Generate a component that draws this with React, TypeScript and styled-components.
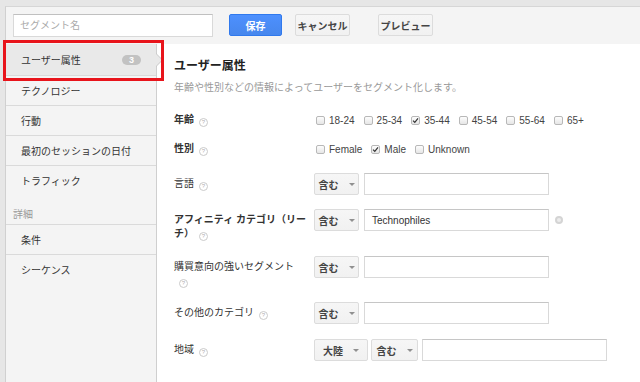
import React from 'react';
import styled, { createGlobalStyle } from 'styled-components';

const GlobalStyle = createGlobalStyle`
  html, body {
    margin: 0;
    padding: 0;
  }
  body {
    font-family: "Liberation Sans", "Noto Sans CJK JP", sans-serif;
    font-size: 10px;
    color: #333;
    background: #e6e6e6;
    overflow: hidden;
  }
`;

const Page = styled.div`
  width: 640px;
  height: 382px;
  box-sizing: border-box;
  padding: 6px 0 0 5px;
  background: #e6e6e6;
  overflow: hidden;
`;

const Frame = styled.div`
  height: 100%;
  display: flex;
  flex-direction: column;
  border-top: 1px solid #d6d6d6;
  border-left: 1px solid #d0d0d0;
  background: #f4f4f4;
`;

const Toolbar = styled.div`
  height: 37px;
  flex: none;
  box-sizing: border-box;
  display: flex;
  align-items: flex-start;
  padding: 7px 0 0 7px;
`;

const NameInput = styled.input`
  width: 200px;
  height: 23px;
  box-sizing: border-box;
  border: 1px solid #d9d9d9;
  border-top-color: #c0c0c0;
  padding: 0 6px;
  font: inherit;
  font-size: 10px;
  background: #fff;
  outline: none;
  &::placeholder {
    color: #aaa;
  }
`;

const Button = styled.button<{ $primary?: boolean; $width: number; $gap: number }>`
  width: ${({ $width }) => $width}px;
  height: 22px;
  margin-left: ${({ $gap }) => $gap}px;
  box-sizing: border-box;
  border-radius: 2px;
  border: 1px solid ${({ $primary }) => ($primary ? '#3079ed' : '#dcdcdc')};
  background: ${({ $primary }) =>
    $primary ? 'linear-gradient(#4d90fe, #4787ed)' : 'linear-gradient(#f6f6f6, #f1f1f1)'};
  color: ${({ $primary }) => ($primary ? '#fff' : '#444')};
  font: inherit;
  font-size: 10px;
  font-weight: bold;
  padding: 0;
`;

const Body = styled.div`
  flex: 1;
  display: flex;
  min-height: 0;
`;

const Sidebar = styled.nav`
  width: 150px;
  flex: none;
  border-right: 1px solid #cfcfcf;
  background: #f4f4f4;
`;

const NavGroup = styled.div``;

const NavItem = styled.div<{ $active?: boolean }>`
  position: relative;
  height: ${({ $active }) => ($active ? 31 : 29)}px;
  display: flex;
  align-items: center;
  padding-left: 15px;
  border-bottom: 1px solid #dadada;
  background: ${({ $active }) => ($active ? '#e9e9e9' : 'transparent')};
  color: #333;
  ${NavGroup} > &:last-child {
    border-bottom: none;
  }
  ${({ $active }) =>
    $active &&
    `
    &::before, &::after {
      content: '';
      position: absolute;
      top: 50%;
      width: 0;
      height: 0;
      border-style: solid;
      border-color: transparent;
    }
    &::before {
      left: 100%;
      margin-top: -7px;
      border-width: 7px 0 7px 7px;
      border-left-color: #c8c8c8;
    }
    &::after {
      left: 100%;
      margin-top: -6px;
      border-width: 6px 0 6px 6px;
      border-left-color: #e9e9e9;
    }
  `}
`;

const Badge = styled.span`
  margin-left: auto;
  margin-right: 15px;
  width: 19px;
  height: 10px;
  border-radius: 5px;
  background: #c2c2c2;
  color: #fff;
  font-size: 9px;
  font-weight: bold;
  line-height: 10px;
  text-align: center;
`;

const Highlight = styled.div`
  position: absolute;
  left: -3px;
  top: -4px;
  width: 161px;
  height: 41px;
  box-sizing: border-box;
  border: 3px solid #e8141b;
  z-index: 2;
  pointer-events: none;
`;

const SectionLabel = styled.div`
  height: 30px;
  box-sizing: border-box;
  display: flex;
  align-items: flex-end;
  padding: 0 0 2px 7px;
  line-height: 14px;
  border-bottom: 1px solid #dadada;
  color: #999;
`;

const Main = styled.main`
  flex: 1;
  background: #fff;
  padding: 14px 0 0 17px;
`;

const Title = styled.h2`
  margin: 0;
  font-size: 12px;
  line-height: 16px;
  font-weight: bold;
  color: #222;
`;

const Subtitle = styled.p`
  margin: 7px 0 0;
  line-height: 14px;
  color: #999;
`;

const Rows = styled.div`
  margin-top: 17px;
`;

const Row = styled.div<{ $mb: number }>`
  display: flex;
  align-items: flex-start;
  margin-bottom: ${({ $mb }) => $mb}px;
`;

const Label = styled.div<{ $bold?: boolean; $top: number }>`
  width: 140px;
  flex: none;
  box-sizing: border-box;
  padding: ${({ $top }) => $top}px 4px 0 0;
  line-height: 14px;
  font-weight: ${({ $bold }) => ($bold ? 'bold' : 'normal')};
  color: #333;
`;

const Help = styled.span`
  display: inline-block;
  width: 9px;
  height: 9px;
  margin-left: 5px;
  box-sizing: border-box;
  border: 1px solid #cacaca;
  border-radius: 50%;
  color: #b0b0b0;
  font-size: 6px;
  font-weight: normal;
  line-height: 7px;
  text-align: center;
  vertical-align: -1px;
`;

const CheckGroup = styled.div`
  display: flex;
  align-items: center;
  height: 16px;
  padding-left: 2px;
`;

const CheckItem = styled.label`
  display: flex;
  align-items: center;
  margin-right: 9px;
  color: #444;
`;

const Box = styled.span`
  width: 9px;
  height: 9px;
  box-sizing: border-box;
  margin-right: 4px;
  border: 1px solid #b8b8b8;
  border-radius: 2px;
  background: linear-gradient(#fdfdfd, #e6e6e6);
  display: flex;
  align-items: center;
  justify-content: center;
`;

const Controls = styled.div`
  display: flex;
  align-items: center;
`;

const Select = styled.div<{ $width: number; $gap: number }>`
  width: ${({ $width }) => $width}px;
  height: 22px;
  margin-right: ${({ $gap }) => $gap}px;
  box-sizing: border-box;
  display: flex;
  align-items: center;
  justify-content: center;
  gap: 10px;
  border: 1px solid #dcdcdc;
  border-radius: 2px;
  background: linear-gradient(#f6f6f6, #f1f1f1);
  font-weight: bold;
  color: #444;
`;

const Caret = styled.span`
  width: 0;
  height: 0;
  border-left: 3px solid transparent;
  border-right: 3px solid transparent;
  border-top: 3px solid #909090;
`;

const TextField = styled.div`
  width: 185px;
  height: 22px;
  box-sizing: border-box;
  padding: 0 7px;
  display: flex;
  align-items: center;
  border: 1px solid #d9d9d9;
  border-top-color: #c6c6c6;
  background: #fff;
  color: #333;
`;

const Clear = styled.span`
  width: 8px;
  height: 8px;
  margin-left: 6px;
  box-sizing: border-box;
  border-radius: 50%;
  border: 2px solid #d4d4d4;
  background: #ececec;
`;

const Check = () => (
  <svg width="7" height="7" viewBox="0 0 7 7">
    <path d="M1 3.6 L2.8 5.4 L6 1.4" fill="none" stroke="#333" strokeWidth="1.2" />
  </svg>
);

const CheckOption = ({ label, checked }: { label: string; checked?: boolean }) => (
  <CheckItem>
    <Box>{checked && <Check />}</Box>
    {label}
  </CheckItem>
);

const Dropdown = ({ label, width = 45, gap = 5 }: { label: string; width?: number; gap?: number }) => (
  <Select $width={width} $gap={gap}>
    {label}
    <Caret />
  </Select>
);

const ages = ['18-24', '25-34', '35-44', '45-54', '55-64', '65+'];

export default function App() {
  return (
    <Page>
      <GlobalStyle />
      <Frame>
        <Toolbar>
          <NameInput placeholder="セグメント名" />
          <Button $primary $width={53} $gap={16}>保存</Button>
          <Button $width={55} $gap={13}>キャンセル</Button>
          <Button $width={55} $gap={28}>プレビュー</Button>
        </Toolbar>
        <Body>
          <Sidebar>
            <NavGroup>
              <NavItem $active>
                ユーザー属性
                <Badge>3</Badge>
                <Highlight />
              </NavItem>
              <NavItem>テクノロジー</NavItem>
              <NavItem>行動</NavItem>
              <NavItem>最初のセッションの日付</NavItem>
              <NavItem>トラフィック</NavItem>
            </NavGroup>
            <SectionLabel>詳細</SectionLabel>
            <NavGroup>
              <NavItem>条件</NavItem>
              <NavItem>シーケンス</NavItem>
            </NavGroup>
          </Sidebar>
          <Main>
            <Title>ユーザー属性</Title>
            <Subtitle>年齢や性別などの情報によってユーザーをセグメント化します。</Subtitle>
            <Rows>
              <Row $mb={13}>
                <Label $bold $top={1}>年齢<Help>?</Help></Label>
                <CheckGroup>
                  {ages.map((a) => (
                    <CheckOption key={a} label={a} checked={a === '35-44'} />
                  ))}
                </CheckGroup>
              </Row>
              <Row $mb={16}>
                <Label $bold $top={1}>性別<Help>?</Help></Label>
                <CheckGroup>
                  <CheckOption label="Female" />
                  <CheckOption label="Male" checked />
                  <CheckOption label="Unknown" />
                </CheckGroup>
              </Row>
              <Row $mb={14}>
                <Label $top={4}>言語<Help>?</Help></Label>
                <Controls>
                  <Dropdown label="含む" />
                  <TextField />
                </Controls>
              </Row>
              <Row $mb={15}>
                <Label $bold $top={4}>アフィニティ カテゴリ（リーチ）<Help>?</Help></Label>
                <Controls>
                  <Dropdown label="含む" />
                  <TextField>Technophiles</TextField>
                  <Clear />
                </Controls>
              </Row>
              <Row $mb={14}>
                <Label $top={4}>
                  購買意向の強いセグメント
                  <br />
                  <Help>?</Help>
                </Label>
                <Controls>
                  <Dropdown label="含む" />
                  <TextField />
                </Controls>
              </Row>
              <Row $mb={15}>
                <Label $top={4}>その他のカテゴリ<Help>?</Help></Label>
                <Controls>
                  <Dropdown label="含む" />
                  <TextField />
                </Controls>
              </Row>
              <Row $mb={0}>
                <Label $top={4}>地域<Help>?</Help></Label>
                <Controls>
                  <Dropdown label="大陸" width={54} gap={3} />
                  <Dropdown label="含む" width={47} gap={4} />
                  <TextField />
                </Controls>
              </Row>
            </Rows>
          </Main>
        </Body>
      </Frame>
    </Page>
  );
}
